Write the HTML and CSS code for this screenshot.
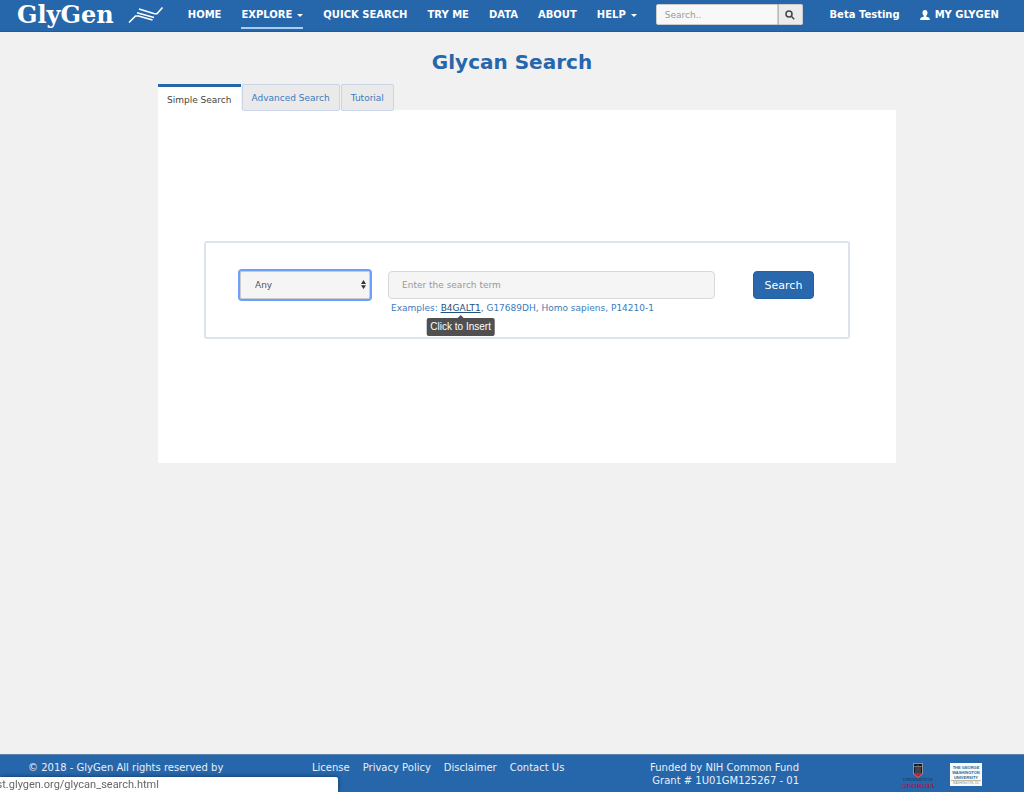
FILE: index.html
```html
<!DOCTYPE html>
<html lang="en">
<head>
  <title>Glycan Search - GlyGen</title>
  <meta charset="utf-8">
  <meta name="viewport" content="width=device-width, initial-scale=1">
  <link rel="stylesheet" href="styles.css">
</head>
<body>
  <header class="navbar">
    <a href="#" class="brand">
      <span class="brand-name">GlyGen</span>
      <svg class="brand-mark" viewBox="0 0 36 18" aria-hidden="true">
        <path d="M1 16.500 7.500 10h3L24.500 14M9 6.800l17 4.700M11 3l15.500 4.700h2.500L34.500 1.500"/>
      </svg>
    </a>
    <nav class="nav">
      <a href="#" class="nav-link">HOME</a>
      <a href="#" class="nav-link nav-link-active">EXPLORE <span class="caret"></span></a>
      <a href="#" class="nav-link">QUICK SEARCH</a>
      <a href="#" class="nav-link">TRY ME</a>
      <a href="#" class="nav-link">DATA</a>
      <a href="#" class="nav-link">ABOUT</a>
      <a href="#" class="nav-link">HELP <span class="caret"></span></a>
    </nav>
    <form class="nav-search">
      <input type="text" class="nav-search-input" placeholder="Search.." aria-label="Search the site">
      <button type="submit" class="nav-search-button" aria-label="Search">
        <svg viewBox="0 0 10 10" width="10" height="10" aria-hidden="true">
          <circle cx="4" cy="4" r="3"/>
          <path d="M6.300 6.300 9.200 9.200"/>
        </svg>
      </button>
    </form>
    <div class="nav-user">
      <a href="#" class="nav-link">Beta Testing</a>
      <a href="#" class="nav-link">
        <svg class="user-icon" viewBox="0 0 10 10" aria-hidden="true">
          <path d="M5 0C3.300 0 2.500 1.200 2.500 2.800c0 1.400.6 2.500 1.400 3.100v.7C3 7.200.2 7.500.2 9v1h9.600V9c0-1.500-2.800-1.800-3.700-2.400v-.7c.8-.6 1.400-1.700 1.400-3.100C7.500 1.200 6.700 0 5 0z"/>
        </svg>
        MY GLYGEN
      </a>
    </div>
  </header>

  <main class="content">
    <h1 class="title">Glycan Search</h1>

    <div class="tabs" role="tablist">
      <button type="button" class="tab tab-active" role="tab" aria-selected="true" aria-controls="simple">Simple Search</button>
      <button type="button" class="tab" role="tab" aria-selected="false">Advanced Search</button>
      <button type="button" class="tab" role="tab" aria-selected="false">Tutorial</button>
    </div>

    <section class="panel" id="simple" role="tabpanel">
      <form class="search-box">
        <div class="select">
          <select class="select-field" aria-label="Search category">
            <option>Any</option>
          </select>
          <svg class="select-arrows" viewBox="0 0 5 9" aria-hidden="true">
            <path d="M0 4 2.500 0 5 4zM0 5.200h5L2.500 9z"/>
          </svg>
        </div>
        <div class="term">
          <input type="text" class="term-field" placeholder="Enter the search term" aria-label="Search term">
          <p class="examples">
            Examples:
            <span class="example-wrap"><a href="#" class="example example-hover" aria-describedby="tip">B4GALT1</a><span class="tooltip" id="tip" role="tooltip">Click to Insert</span></span>,
            <a href="#" class="example">G17689DH</a>,
            <a href="#" class="example">Homo sapiens</a>,
            <a href="#" class="example">P14210-1</a>
          </p>
        </div>
        <button type="submit" class="search-button">Search</button>
      </form>
    </section>
  </main>

  <footer class="footer">
    <p class="copyright">© 2018 - GlyGen All rights reserved by</p>
    <nav class="footer-links">
      <a href="#">License</a>
      <a href="#">Privacy Policy</a>
      <a href="#">Disclaimer</a>
      <a href="#">Contact Us</a>
    </nav>
    <p class="funding">Funded by NIH Common Fund<br>Grant # 1U01GM125267 - 01</p>
    <div class="logos">
      <a href="#" aria-label="University of Georgia">
        <svg width="32" height="26" viewBox="0 0 32 26" aria-hidden="true">
          <path fill="#9a8c93" d="M11 0h10v11l-5 4-5-4z"/>
          <path fill="#17171c" d="M12 1h8v9h-8z"/>
          <path fill="#c51f3c" d="M12 10h8v1l-4 3.200L12 11z"/>
          <path stroke="#6c6d76" fill="none" d="M14 3v7M16 2v8M18 3v7M12 3.500h8"/>
          <text x="16" y="18" text-anchor="middle" class="uga-small">UNIVERSITY OF</text>
          <text x="16" y="25" text-anchor="middle" class="uga-name">GEORGIA</text>
        </svg>
      </a>
      <a href="#" aria-label="The George Washington University">
        <svg width="32" height="23" viewBox="0 0 32 23" aria-hidden="true">
          <path fill="#f7f9fa" d="M0 0h32v23H0z"/>
          <text x="16" y="6" text-anchor="middle" class="gw-name">THE GEORGE</text>
          <text x="16" y="11" text-anchor="middle" class="gw-name">WASHINGTON</text>
          <text x="16" y="16" text-anchor="middle" class="gw-name">UNIVERSITY</text>
          <path stroke="#c9b896" d="M1 17.500h30"/>
          <text x="16" y="21" text-anchor="middle" class="gw-city">WASHINGTON, DC</text>
        </svg>
      </a>
    </div>
  </footer>

  <div class="status">tst.glygen.org/glycan_search.html</div>
</body>
</html>
```

FILE: styles.css
```css
*, *::before, *::after {
  margin: 0;
  padding: 0;
  box-sizing: border-box;
}

body {
  min-height: 100vh;
  display: flex;
  flex-direction: column;
  background-color: #f1f1f1;
  color: #333333;
  font-family: Verdana, "DejaVu Sans", sans-serif;
  font-size: 9px;
}

a {
  color: inherit;
  text-decoration: none;
}

input, select, button {
  font: inherit;
}

.navbar {
  height: 32px;
  padding: 1px 25px 0 17px;
  display: flex;
  align-items: flex-start;
  background-color: #2666ab;
  border-bottom: 1px solid #1f5a9a;
  color: #ffffff;
}

.brand {
  display: flex;
  align-items: center;
  gap: 14px;
  margin-right: 24px;
}

.brand-name {
  font-family: "DejaVu Serif", serif;
  font-size: 24px;
  font-weight: bold;
  line-height: 28px;
}

.brand-mark {
  width: 36px;
  height: 18px;
  fill: none;
  stroke: #ffffff;
  stroke-width: 1.6;
}

.nav {
  display: flex;
  gap: 20px;
}

.nav-link {
  display: flex;
  align-items: center;
  height: 28px;
  border-bottom: 2px solid transparent;
  font-size: 10px;
  font-weight: bold;
  line-height: 24px;
  padding-top: 2px;
  white-space: nowrap;
}

.nav-link-active {
  border-bottom-color: #a9cdf3;
}

.caret {
  margin-left: 5px;
  border: 3px solid transparent;
  border-top-color: #ffffff;
  border-bottom: 0;
}

.nav-search {
  display: flex;
  height: 21px;
  margin-top: 3px;
  margin-left: 19px;
}

.nav-search-input {
  width: 122px;
  padding: 0 8px;
  border: 1px solid #cccccc;
  border-radius: 2px 0 0 2px;
  background-color: #f8f8f8;
}

.nav-search-input::placeholder, .term-field::placeholder {
  color: #999999;
}

.nav-search-button {
  width: 25px;
  display: flex;
  align-items: center;
  justify-content: center;
  border: 1px solid #cccccc;
  border-left-color: #bbbbbb;
  border-radius: 0 2px 2px 0;
  background-color: #ebebeb;
  fill: none;
  stroke: #444444;
  stroke-width: 1.5;
}

.nav-user {
  display: flex;
  gap: 20px;
  margin-left: auto;
}

.user-icon {
  width: 10px;
  height: 10px;
  margin-right: 5px;
  fill: #ffffff;
}

.content {
  flex: 1;
  padding: 0 128px 0 158px;
}

.title {
  margin-right: 30px;
  padding: 16px 0 8px;
  color: #2666ab;
  font-size: 20px;
  line-height: 28px;
  text-align: center;
}

.tabs {
  display: flex;
  align-items: flex-start;
  gap: 1px;
}

.tab {
  height: 27px;
  padding: 0 9px;
  border: 1px solid #cbd5e8;
  border-radius: 2px;
  background-color: #eaeaea;
  color: #3c7abd;
}

.tab-active {
  padding: 2px 9px 0;
  border: 0;
  border-top: 3px solid #2666ab;
  border-radius: 0;
  background-color: #ffffff;
  color: #444444;
}

.panel {
  margin-top: -1px;
  padding: 131px 46px 124px;
  background-color: #ffffff;
}

.search-box {
  display: flex;
  align-items: flex-start;
  padding: 28px 34px 22px;
  border: 2px solid #dce2f0;
  border-radius: 3px;
}

.select {
  position: relative;
  width: 130px;
  margin-right: 18px;
}

.select-field {
  display: block;
  width: 100%;
  height: 28px;
  padding: 0 14px;
  appearance: none;
  border: 1px solid #cccccc;
  border-radius: 2px;
  outline: 2px solid #6f9ff8;
  background-color: #f5f5f5;
  color: #555555;
}

.select-arrows {
  position: absolute;
  top: 9px;
  right: 4px;
  width: 5px;
  height: 9px;
  fill: #333333;
}

.term {
  flex: 1;
  margin-right: 38px;
}

.term-field {
  display: block;
  width: 100%;
  height: 28px;
  padding: 0 13px;
  border: 1px solid #d8d8d8;
  border-radius: 4px;
  background-color: #f5f5f5;
}

.examples {
  padding: 3px 3px 0;
  color: #3c7abd;
  line-height: 13px;
}

.example-wrap {
  position: relative;
}

.example-hover {
  color: #23527c;
  text-decoration: underline;
}

.tooltip {
  position: absolute;
  top: 15px;
  left: 50%;
  padding: 0 4px;
  transform: translateX(-50%);
  border-radius: 2px;
  background-color: #505050;
  color: #ffffff;
  font-family: "Liberation Sans", sans-serif;
  font-size: 10px;
  line-height: 18px;
  white-space: nowrap;
}

.tooltip::before {
  content: "";
  position: absolute;
  bottom: 100%;
  left: 50%;
  margin-left: -3px;
  border: 3px solid transparent;
  border-top: 0;
  border-bottom-color: #505050;
}

.search-button {
  width: 61px;
  height: 28px;
  border: 1px solid #2260a3;
  border-radius: 4px;
  background-color: #2968ad;
  color: #ffffff;
  font-size: 11px;
}

.footer {
  display: flex;
  align-items: flex-start;
  height: 38px;
  padding: 6px 42px 0 28px;
  border-top: 1px solid #5b81a8;
  background-color: #2666ab;
  color: #e8eff7;
  font-size: 10px;
  line-height: 13px;
}

.copyright {
  width: 284px;
}

.footer-links {
  display: flex;
  gap: 13px;
}

.funding {
  margin-left: auto;
  margin-right: 103px;
  text-align: right;
}

.logos {
  display: flex;
  gap: 16px;
}

.logos svg {
  display: block;
  margin-top: 2px;
}

.uga-small {
  fill: #24283c;
  font-family: "Liberation Serif", serif;
  font-size: 4px;
}

.uga-name {
  fill: #a01c45;
  font-family: "Liberation Serif", serif;
  font-size: 7px;
  font-weight: bold;
}

.gw-name {
  fill: #276c94;
  font-family: "Liberation Sans", sans-serif;
  font-size: 4px;
  font-weight: bold;
}

.gw-city {
  fill: #6e9db8;
  font-family: "Liberation Sans", sans-serif;
  font-size: 3px;
}

/* link address shown in the window corner */
.status {
  position: fixed;
  left: 0;
  bottom: 0;
  width: 338px;
  height: 15px;
  overflow: hidden;
  border-top-right-radius: 2px;
  background-color: #ffffff;
  box-shadow: 0 0 4px rgba(0, 0, 0, 0.5);
  color: #666666;
  font-family: Roboto, sans-serif;
  font-size: 11px;
  line-height: 16px;
  text-indent: -7px;
}
```
